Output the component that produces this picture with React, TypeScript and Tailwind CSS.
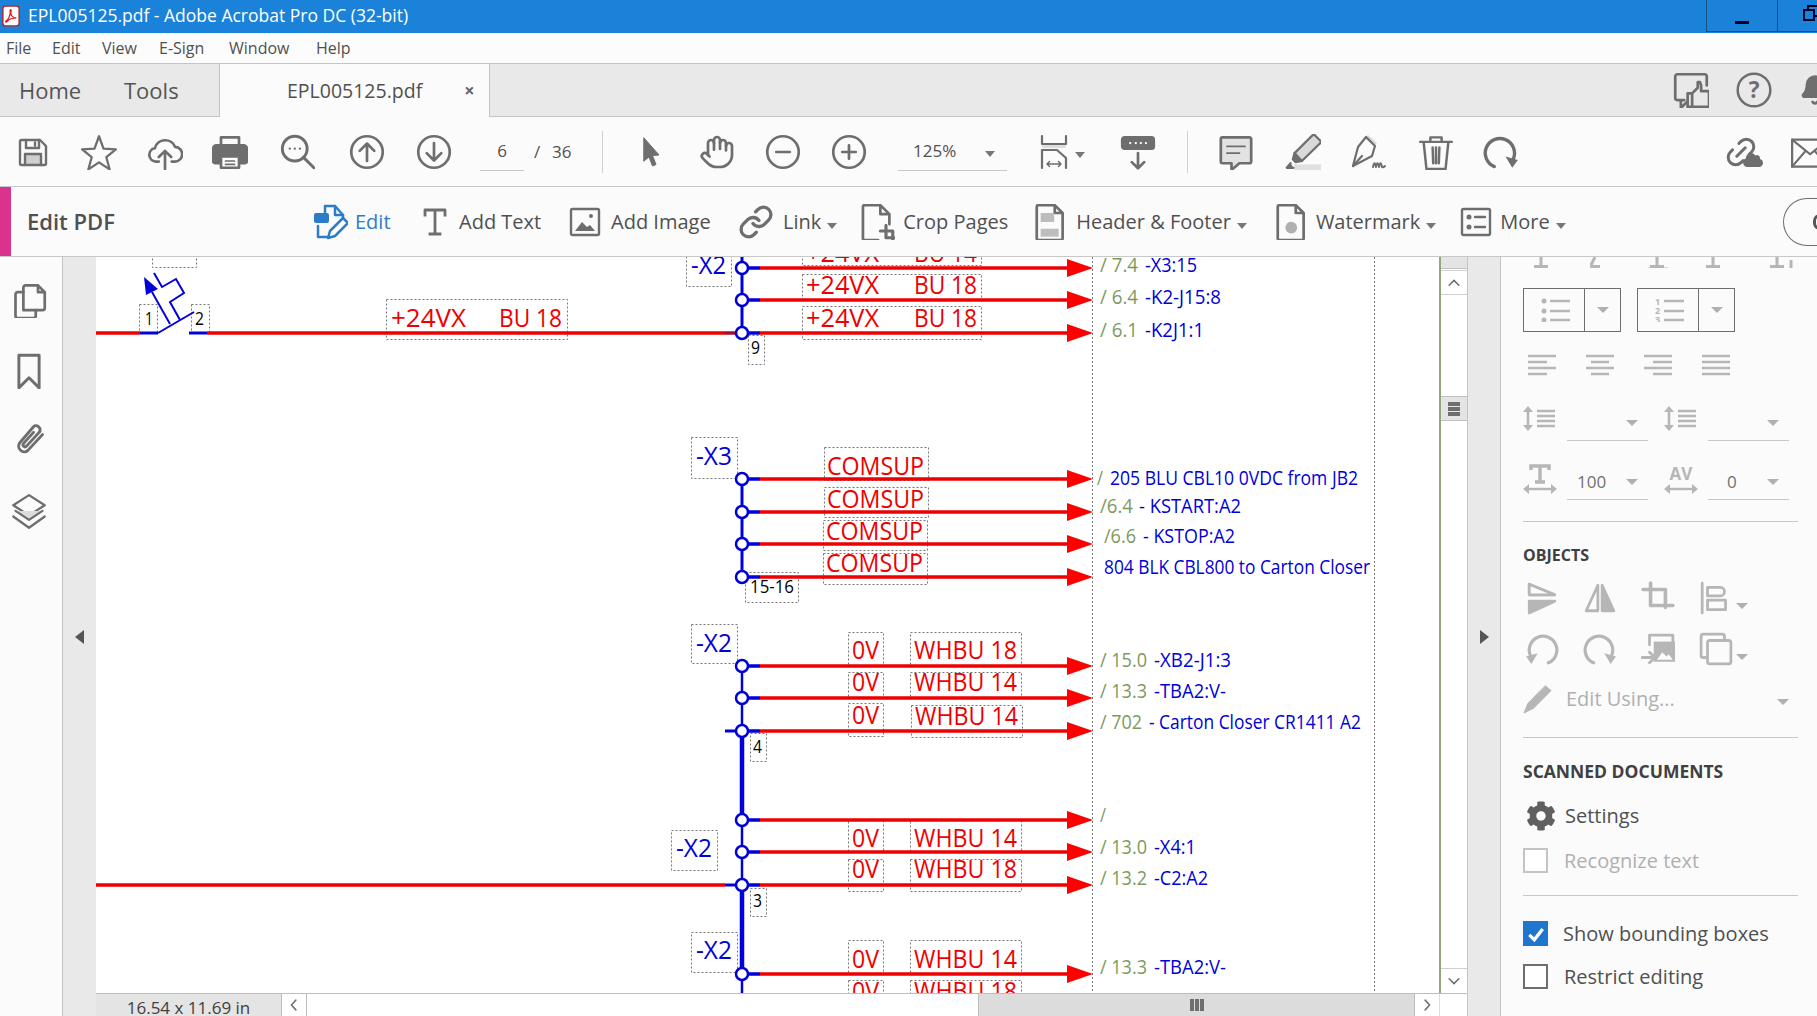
import type { ReactNode } from "react"
import { Bell, Hand, Link, Link2 } from "lucide-react"
import { FaCog, FaCloud } from "react-icons/fa"

const G = "#6e6e6e"
const L = "#b6b6b6"
const BLUE = "#0000d8"
const RED = "#ee0000"
const GREEN = "#7d9a5e"

function Ico({ children, className = "w-8 h-8", color = G, sw = 2.4 }: { children: ReactNode; className?: string; color?: string; sw?: number }) {
  return (
    <svg viewBox="0 0 32 32" fill="none" stroke={color} strokeWidth={sw} strokeLinecap="round" strokeLinejoin="round" className={className}>
      {children}
    </svg>
  )
}

function Caret({ light = false }: { light?: boolean }) {
  return <span className={light ? "inline-block h-0 w-0 border-x-[6px] border-t-[6px] border-x-transparent border-t-[#b0b0b0]" : "inline-block h-0 w-0 border-x-[5px] border-t-[6px] border-x-transparent border-t-[#777777]"} />
}

function Slot({ w, children }: { w: string; children: ReactNode }) {
  return <div className={`flex shrink-0 items-center justify-center ${w}`}>{children}</div>
}

const Save = () => (
  <Ico>
    <rect x="8" y="18" width="16" height="10" fill="#cfcfcf" stroke="none" />
    <path d="M3 5.500A1.500 1.500 0 0 1 4.500 4H23l6 6v17.500a1.500 1.500 0 0 1-1.500 1.500h-23A1.500 1.500 0 0 1 3 27.500z" />
    <path d="M9 4v8h13V4M18 6.500v3M8 29V18h16v11" />
  </Ico>
)
const Star = () => (
  <Ico className="h-9 w-9" sw={2}>
    <path d="M16 2l4 11 11 .6-8.500 7 3 10.900L16 25.200 6.500 31.500l3-10.900L1 13.600 12 13z" />
  </Ico>
)
const Upload = () => (
  <Ico className="h-9 w-9">
    <path d="M10.500 24.500H8a6 6 0 0 1-1-11.900A9.500 9.500 0 0 1 25 11.500a6.500 6.500 0 0 1-.5 13H22" />
    <path d="M16 31V15M10.500 20.500L16 15l5.500 5.500" />
  </Ico>
)
const Print = () => (
  <Ico className="h-9 w-9">
    <path d="M8 11V3h16v8" />
    <path d="M4 10h24a3 3 0 0 1 3 3v11a2 2 0 0 1-2 2h-4v-6H7v6H3a2 2 0 0 1-2-2V13a3 3 0 0 1 3-3z" fill={G} />
    <rect x="8" y="20" width="16" height="10" fill="#fff" />
    <path d="M12 24h8M12 27h8" strokeWidth="1.500" />
  </Ico>
)
const Zoom = () => (
  <Ico className="h-9 w-9" sw={2.6}>
    <circle cx="14" cy="13" r="11" />
    <path d="M22 21l9 9" />
    <path d="M9.500 13h.1M14 13h.1M18.500 13h.1" strokeWidth="2" />
  </Ico>
)
const Circ = ({ d }: { d: string }) => (
  <Ico className="h-9 w-9" sw={2.4}>
    <circle cx="16" cy="16" r="14" />
    <path d={d} />
  </Ico>
)
const Cursor = () => (
  <Ico sw={1}>
    <path d="M9 2l15 17-6.500.5 3.500 9-3.500 1.500-3.500-9L9 25z" fill={G} />
  </Ico>
)
const FitW = () => (
  <Ico className="h-9 w-8" sw={2.2}>
    <rect x="4" y="8" width="24" height="4" fill="#dddddd" stroke="none" />
    <path d="M4 0v8h24V0" />
    <path d="M4 32V14h15l9 8v10" />
    <path d="M9 28h14M11.500 25.500L9 28l2.500 2.500M20.500 25.500L23 28l-2.500 2.500" strokeWidth="1.500" />
  </Ico>
)
const Tray = () => (
  <Ico className="h-9 w-9">
    <rect x="2" y="3" width="28" height="10" rx="2" fill={G} />
    <path d="M9 8h.1M14 8h.1M18.500 8h.1M23 8h.1" stroke="#fff" strokeWidth="2" />
    <path d="M16 17v13M10.500 25l5.500 5.500 5.500-5.500" />
  </Ico>
)
const Comment = () => (
  <Ico className="h-9 w-9">
    <path d="M4 3h24a1.500 1.500 0 0 1 1.500 1.500v20A1.500 1.500 0 0 1 28 26h-9l-7 6v-6H4a1.500 1.500 0 0 1-1.500-1.500v-20A1.500 1.500 0 0 1 4 3z" fill="#e2e2e2" />
    <path d="M8 11h16M8 17h11" strokeWidth="1.600" />
  </Ico>
)
const Marker = () => (
  <Ico className="h-9 w-9" sw={2}>
    <rect x="8" y="27" width="24" height="5" fill="#e0e0e0" stroke="none" />
    <path d="M27 1.500l4 4a2 2 0 0 1 0 3L15 24l-6.500-7L24 1.500a2 2 0 0 1 3 0z" fill="#d9d9d9" />
    <path d="M8.500 17L7 22.500 9.500 25l5.500-1M5 26l-3.500 4h6" fill={G} />
  </Ico>
)
const Sign = () => (
  <svg viewBox="0 0 36 36" fill="none" stroke={G} strokeWidth="2.200" strokeLinecap="round" strokeLinejoin="round" className="h-9 w-9">
    <path d="M17 1l9 8-3 3-9-8z" fill="#d9d9d9" stroke="none" />
    <path d="M15 3l9 9-3 10L2 32l5-19z" />
    <path d="M2 32l9-10" />
    <path d="M22 33c1-5 2-5 3 0 1-5 2-5 3 0 1-5 2-5 3 0 1 1 2 0 3-1" strokeWidth="2" />
  </svg>
)
const Trash = () => (
  <Ico className="h-9 w-9" sw={2.2}>
    <path d="M2 7h28M11 7V3h10v4M5 7l2.500 24h17L27 7M13 12l.5 14M16 12v14M19 12l-.5 14" />
  </Ico>
)
const Rotate = ({ color = G, flip = false, size = "h-9 w-9" }: { color?: string; flip?: boolean; size?: string }) => (
  <Ico className={flip ? `${size} -scale-x-100` : size} color={color} sw={3}>
    <path d="M10 29A13 13 0 1 1 27 22" />
    <path d="M20 20l11 3-5 7z" fill={color} stroke="none" />
  </Ico>
)
const Like = () => (
  <Ico className="h-9 w-9">
    <path d="M10 25H4a2 2 0 0 1-2-2V4a2 2 0 0 1 2-2h24a2 2 0 0 1 2 2v8M7 25v7l5-5" />
    <path d="M13 19h4v12h-4zM17 19l5-5v-5h2l1 3v5h7v14H17" fill="#e9e9e9" />
  </Ico>
)
const Help = () => (
  <svg viewBox="0 0 32 32" className="h-9 w-9">
    <circle cx="16" cy="16" r="14.500" fill="none" stroke={G} strokeWidth="2.200" />
    <text x="16" y="23" textAnchor="middle" fontSize="20" fontWeight="700" fill={G} fontFamily="Open Sans">?</text>
  </svg>
)
const LinkCloud = () => (
  <div className="relative h-9 w-10">
    <Link2 className="absolute left-0 top-0 h-9 w-9 -rotate-45 text-[#6e6e6e]" strokeWidth={2} />
    <FaCloud className="absolute bottom-0 right-0 h-5 w-5 text-[#6e6e6e]" />
  </div>
)
const Mail = () => (
  <Ico className="h-9 w-9 shrink-0" sw={2}>
    <rect x="1" y="5" width="32" height="24" />
    <path d="M1 5l16 13L33 5M1 29l12-14M33 29L21 15" />
  </Ico>
)

const EditIco = () => (
  <svg viewBox="0 0 36 36" fill="none" stroke="#2d7cc8" strokeWidth="2.500" strokeLinecap="round" strokeLinejoin="round" className="h-9 w-9 shrink-0">
    <path d="M13 9V2h10l8 9v6" />
    <path d="M23 2v9h8" />
    <rect x="2" y="9" width="15" height="10" rx="2" fill="#2d7cc8" stroke="none" />
    <path d="M6 22v11h10" />
    <path d="M16 34l2-7L31 14l5 5-13 13z" fill="#fff" />
  </svg>
)
const TIco = () => (
  <Ico>
    <path d="M6 9V4h20v5M16 4v24M11 28h10" strokeWidth="2.800" strokeLinecap="square" />
  </Ico>
)
const ImgIco = () => (
  <Ico>
    <rect x="2" y="3" width="28" height="26" rx="1.500" />
    <path d="M6 25l7-9 5 5 3-2 5 6z" fill={G} stroke="none" />
    <circle cx="22" cy="10" r="2" fill={G} stroke="none" />
  </Ico>
)
const CropIco = () => (
  <Ico className="h-9 w-9" sw={2.400}>
    <path d="M17 32H5a1.500 1.500 0 0 1-1.500-1.500v-28A1.500 1.500 0 0 1 5 1h14l8 8v9M19 1v8h8" />
    <path d="M24 19v11h8M19 24h11v8" strokeWidth="2.800" />
  </Ico>
)
const HeaderIco = () => (
  <Ico className="h-9 w-9" sw={2.400}>
    <path d="M7 1h15l7 7v22.500a1.500 1.500 0 0 1-1.500 1.500h-20A1.500 1.500 0 0 1 6 30.500v-28A1.500 1.500 0 0 1 7 1zM22 1v7h7" />
    <rect x="9.500" y="8" width="12" height="8" fill="#bdbdbd" stroke="none" />
    <rect x="9.500" y="22" width="16" height="7" fill="#bdbdbd" stroke="none" />
  </Ico>
)
const WaterIco = () => (
  <Ico className="h-9 w-9" sw={2.400}>
    <path d="M7 1h15l7 7v22.500a1.500 1.500 0 0 1-1.500 1.500h-20A1.500 1.500 0 0 1 6 30.500v-28A1.500 1.500 0 0 1 7 1zM22 1v7h7" />
    <circle cx="18" cy="21" r="4" fill="#b0b0b0" stroke="#b0b0b0" strokeDasharray="2 1" />
  </Ico>
)
const MoreIco = () => (
  <Ico>
    <rect x="2" y="3" width="28" height="26" rx="1.500" />
    <circle cx="9" cy="11" r="2.500" fill={G} stroke="none" />
    <circle cx="9" cy="21" r="2.500" fill={G} stroke="none" />
    <path d="M15 11h10M15 21h10" />
  </Ico>
)

const Pages = () => (
  <Ico className="h-9 w-9">
    <path d="M11 25V5a2 2 0 0 1 2-2h11l6 6v14a2 2 0 0 1-2 2zM24 3v6h6" />
    <path d="M11 9H6a2 2 0 0 0-2 2v19a2 2 0 0 0 2 2h14a2 2 0 0 0 2-2v-5" />
  </Ico>
)
const Bookmark2 = () => (
  <Ico className="h-9 w-9" sw={2.600}>
    <path d="M7 2h18v29l-9-9-9 9z" />
  </Ico>
)
const Clip = () => (
  <Ico className="h-9 w-9" sw={2.600}>
    <path d="M28 13L15 27c-4 4-11-2-7-7L20 6c3-3 8 2 5 5L14 23c-2 2-4 0-3-2l9-10" />
  </Ico>
)
const LayersI = () => (
  <Ico className="h-9 w-9" sw={2}>
    <path d="M16 1l14 9-14 9-14-9z" />
    <path d="M4 15l12 8 12-8" fill="#dcdcdc" />
    <path d="M2 20l14 10 14-10" />
  </Ico>
)

/* right panel, all of it greyed out */
const ListI = ({ numbered }: { numbered?: boolean }) => (
  <svg viewBox="0 0 32 24" className="h-6 w-8 font-['Open_Sans']" fill="none" stroke={L} strokeWidth="2.400">
    {numbered ? (
      <>
        <text x="1" y="7" fontSize="9" fontWeight="700" fill={L} stroke="none">1</text>
        <text x="1" y="16" fontSize="9" fontWeight="700" fill={L} stroke="none">2</text>
        <text x="1" y="24.500" fontSize="9" fontWeight="700" fill={L} stroke="none">3</text>
      </>
    ) : (
      <>
        <circle cx="4" cy="3" r="2.500" fill={L} stroke="none" />
        <circle cx="4" cy="13" r="2.500" fill={L} stroke="none" />
        <circle cx="4" cy="22" r="2.500" fill={L} stroke="none" />
      </>
    )}
    <path d="M10 3h20M10 13h20M10 22h20" />
  </svg>
)
const Align = ({ d }: { d: string }) => (
  <svg viewBox="0 0 28 22" className="h-[22px] w-7" fill="none" stroke={L} strokeWidth="2.400">
    <path d={d} />
  </svg>
)
const LineSp = () => (
  <svg viewBox="0 0 32 27" className="h-[27px] w-8" fill="none" stroke={L} strokeWidth="2.600">
    <path d="M5 3v21" />
    <path d="M0 7l5-6 5 6zM0 20l5 6 5-6z" fill={L} stroke="none" />
    <path d="M14 6h18M14 11h18M14 16h18M14 21h18" />
  </svg>
)
const WidthT = ({ av }: { av?: boolean }) => (
  <svg viewBox="0 0 34 30" className="h-[30px] w-[34px]" fill="none" stroke={L} strokeWidth="2.400">
    {av ? (
      <text x="17" y="16" textAnchor="middle" fontSize="17" fontWeight="700" fill={L} stroke="none" fontFamily="Open Sans">AV</text>
    ) : (
      <path d="M8 6V2h18v4M17 2v16M12 18h10" strokeWidth="3.400" />
    )}
    <path d="M3 25h28" />
    <path d="M6 20l-6 5 6 5zM28 20l6 5-6 5z" fill={L} stroke="none" />
  </svg>
)
const PanelIco = ({ children }: { children: ReactNode }) => (
  <Ico className="h-[34px] w-[34px]" color={L} sw={2.600}>
    {children}
  </Ico>
)

function Tx({ x, y, w, fill, size, children }: { x: number; y: number; w: number; fill: string; size: number; children: string }) {
  return (
    <text x={x} y={y} textLength={w} lengthAdjust="spacingAndGlyphs" fontSize={size} fill={fill}>
      {children}
    </text>
  )
}

function Box({ x1, y1, x2, y2 }: { x1: number; y1: number; x2: number; y2: number }) {
  return <rect x={x1 + 0.5} y={y1 + 0.5} width={x2 - x1} height={y2 - y1} fill="none" stroke="#777" strokeWidth="1" strokeDasharray="2 2" />
}

const wires = [268, 300, 333, 479, 512, 544, 577, 666, 698, 731, 820, 852, 885, 974]

type Lab = { t: string; x: number; y: number; w: number }
const redLabels: Lab[] = [
  { t: "+24VX", x: 391, y: 327, w: 75 },
  { t: "BU 18", x: 499, y: 327, w: 63 },
  { t: "+24VX", x: 806, y: 262, w: 73 },
  { t: "BU 14", x: 914, y: 262, w: 63 },
  { t: "+24VX", x: 806, y: 294, w: 73 },
  { t: "BU 18", x: 914, y: 294, w: 63 },
  { t: "+24VX", x: 806, y: 327, w: 73 },
  { t: "BU 18", x: 914, y: 327, w: 63 },
  { t: "COMSUP", x: 827, y: 475, w: 97 },
  { t: "COMSUP", x: 827, y: 508, w: 97 },
  { t: "COMSUP", x: 826, y: 540, w: 97 },
  { t: "COMSUP", x: 826, y: 572, w: 97 },
  { t: "0V", x: 852, y: 659, w: 27 },
  { t: "WHBU 18", x: 914, y: 659, w: 103 },
  { t: "0V", x: 852, y: 691, w: 27 },
  { t: "WHBU 14", x: 914, y: 691, w: 103 },
  { t: "0V", x: 852, y: 724, w: 27 },
  { t: "WHBU 14", x: 915, y: 725, w: 103 },
  { t: "0V", x: 852, y: 847, w: 27 },
  { t: "WHBU 14", x: 914, y: 847, w: 103 },
  { t: "0V", x: 852, y: 878, w: 27 },
  { t: "WHBU 18", x: 914, y: 878, w: 103 },
  { t: "0V", x: 852, y: 968, w: 27 },
  { t: "WHBU 14", x: 914, y: 968, w: 103 },
  { t: "0V", x: 852, y: 1000, w: 27 },
  { t: "WHBU 18", x: 914, y: 1000, w: 103 },
]

const boxes = [
  [152, 250, 196, 267], [139, 304, 157, 333], [191, 304, 209, 333], [386, 299, 567, 339],
  [686, 240, 731, 286], [802, 240, 981, 265], [802, 274, 981, 300], [802, 306, 981, 339], [748, 335, 764, 364],
  [691, 437, 737, 478], [824, 447, 928, 480], [824, 487, 928, 517], [823, 520, 927, 550], [823, 553, 927, 584], [745, 572, 798, 602],
  [691, 624, 737, 663], [848, 632, 883, 665], [848, 672, 883, 697], [848, 703, 883, 736], [910, 632, 1021, 665], [910, 672, 1021, 697], [911, 705, 1022, 737], [750, 733, 766, 761],
  [671, 830, 717, 870], [848, 819, 883, 852], [848, 859, 883, 891], [910, 819, 1021, 852], [910, 859, 1021, 891], [750, 888, 766, 916],
  [691, 932, 737, 972], [848, 940, 883, 973], [910, 940, 1021, 973], [848, 980, 883, 1010], [910, 980, 1021, 1010],
]

const refs: { g: string; gx: number; gw: number; t: string; x: number; w: number; y: number }[] = [
  { g: "/ 7.4", gx: 1100, gw: 38, t: "-X3:15", x: 1145, w: 52, y: 272 },
  { g: "/ 6.4", gx: 1100, gw: 38, t: "-K2-J15:8", x: 1145, w: 76, y: 304 },
  { g: "/ 6.1", gx: 1100, gw: 38, t: "-K2J1:1", x: 1145, w: 59, y: 337 },
  { g: "/", gx: 1097, gw: 6, t: "205 BLU CBL10 0VDC from JB2", x: 1110, w: 248, y: 485 },
  { g: "/6.4", gx: 1100, gw: 33, t: "- KSTART:A2", x: 1139, w: 102, y: 513 },
  { g: "/6.6", gx: 1104, gw: 32, t: "- KSTOP:A2", x: 1143, w: 92, y: 543 },
  { g: "", gx: 0, gw: 0, t: "804 BLK CBL800 to Carton Closer", x: 1104, w: 266, y: 574 },
  { g: "/ 15.0", gx: 1100, gw: 47, t: "-XB2-J1:3", x: 1154, w: 77, y: 667 },
  { g: "/ 13.3", gx: 1100, gw: 47, t: "-TBA2:V-", x: 1154, w: 72, y: 698 },
  { g: "/ 702", gx: 1100, gw: 42, t: "- Carton Closer CR1411 A2", x: 1149, w: 212, y: 729 },
  { g: "/", gx: 1100, gw: 6, t: "", x: 0, w: 0, y: 822 },
  { g: "/ 13.0", gx: 1100, gw: 47, t: "-X4:1", x: 1154, w: 42, y: 854 },
  { g: "/ 13.2", gx: 1100, gw: 47, t: "-C2:A2", x: 1154, w: 54, y: 885 },
  { g: "/ 13.3", gx: 1100, gw: 47, t: "-TBA2:V-", x: 1154, w: 72, y: 974 },
]

function Schematic() {
  return (
    <svg viewBox="96 257 1343 736" className="h-[736px] w-[1343px] shrink-0 bg-white font-['Open_Sans']">
      <line x1="1092.500" y1="257" x2="1092.500" y2="993" stroke="#777" strokeDasharray="2 2" />
      <line x1="1374.500" y1="257" x2="1374.500" y2="993" stroke="#777" strokeDasharray="2 2" />
      {boxes.map(([a, b, c, d], i) => (
        <Box key={i} x1={a} y1={b} x2={c} y2={d} />
      ))}

      {/* bus, in three separate runs */}
      <line x1="742" y1="257" x2="742" y2="333" stroke={BLUE} strokeWidth="3" />
      <line x1="742" y1="479" x2="742" y2="577" stroke={BLUE} strokeWidth="3" />
      <line x1="742" y1="666" x2="742" y2="731" stroke={BLUE} strokeWidth="2.500" />
      <line x1="742" y1="731" x2="742" y2="820" stroke={BLUE} strokeWidth="4.500" />
      <line x1="742" y1="820" x2="742" y2="885" stroke={BLUE} strokeWidth="2.500" />
      <line x1="742" y1="885" x2="742" y2="974" stroke={BLUE} strokeWidth="4.500" />
      <line x1="742" y1="974" x2="742" y2="993" stroke={BLUE} strokeWidth="2.500" />

      {/* feed lines */}
      <line x1="96" y1="333" x2="140" y2="333" stroke={RED} strokeWidth="3.500" />
      <line x1="207" y1="333" x2="725" y2="333" stroke={RED} strokeWidth="3.500" />
      <line x1="96" y1="885" x2="725" y2="885" stroke={RED} strokeWidth="3.500" />
      <line x1="725" y1="333" x2="736" y2="333" stroke="#a01030" strokeWidth="3.500" />
      <line x1="725" y1="731" x2="736" y2="731" stroke={BLUE} strokeWidth="3" />
      <line x1="725" y1="885" x2="736" y2="885" stroke={BLUE} strokeWidth="3" />

      {wires.map((y) => (
        <g key={y}>
          <line x1="748" y1={y} x2="760" y2={y} stroke={BLUE} strokeWidth="3.500" />
          <line x1="760" y1={y} x2="1068" y2={y} stroke={RED} strokeWidth="3.500" />
          <polygon points={`1067,${y - 9} 1093,${y} 1067,${y + 9}`} fill="#ff0000" />
          <circle cx="742" cy={y} r="6" fill="#fff" stroke={BLUE} strokeWidth="2.500" />
        </g>
      ))}

      {/* switch symbol */}
      <g fill="none" stroke={BLUE} strokeWidth="2">
        <line x1="140" y1="333" x2="158" y2="333" strokeWidth="3" />
        <line x1="189" y1="333" x2="207" y2="333" strokeWidth="3" />
        <line x1="158" y1="333" x2="194" y2="312" />
        <line x1="152" y1="292" x2="170" y2="324" />
        <polyline points="180,320 170,302 184,293 176,279 162,287 154,273" />
        <polygon points="144,277 146,295 158,289" fill={BLUE} stroke="none" />
      </g>

      {redLabels.map((l, i) => (
        <Tx key={i} x={l.x} y={l.y} w={l.w} fill={RED} size={26}>{l.t}</Tx>
      ))}

      <Tx x={691} y={274} w={35} fill={BLUE} size={26}>-X2</Tx>
      <Tx x={696} y={465} w={36} fill={BLUE} size={26}>-X3</Tx>
      <Tx x={696} y={652} w={36} fill={BLUE} size={26}>-X2</Tx>
      <Tx x={676} y={857} w={36} fill={BLUE} size={26}>-X2</Tx>
      <Tx x={696} y={959} w={36} fill={BLUE} size={26}>-X2</Tx>

      <Tx x={145} y={325} w={8} fill="#000" size={18}>1</Tx>
      <Tx x={195} y={325} w={9} fill="#000" size={18}>2</Tx>
      <Tx x={751} y={354} w={9} fill="#000" size={18}>9</Tx>
      <Tx x={750} y={593} w={44} fill="#000" size={18}>15-16</Tx>
      <Tx x={753} y={753} w={9} fill="#000" size={18}>4</Tx>
      <Tx x={753} y={907} w={9} fill="#000" size={18}>3</Tx>

      {refs.map((r, i) => (
        <g key={i}>
          {r.g && <Tx x={r.gx} y={r.y} w={r.gw} fill={GREEN} size={20}>{r.g}</Tx>}
          {r.t && <Tx x={r.x} y={r.y} w={r.w} fill={BLUE} size={20}>{r.t}</Tx>}
        </g>
      ))}
    </svg>
  )
}

function ScrollV() {
  return (
    <div className="flex w-[26px] shrink-0 flex-col bg-white">
      <div className="h-[12px] border-b border-[#c0c0c0] bg-[#e4e4e4]" />
      <div className="mt-px flex h-[25px] items-center justify-center border-y border-[#d0d0d0]">
        <Ico className="h-3 w-3" sw={4}><path d="M3 22L16 9l13 13" /></Ico>
      </div>
      <div className="mt-[101px] flex h-[25px] flex-col items-center justify-center gap-px border-y border-[#c0c0c0] bg-[#e4e4e4]">
        <div className="h-1 w-3 bg-[#6e6e6e]" />
        <div className="h-1 w-3 bg-[#6e6e6e]" />
        <div className="h-1 w-3 bg-[#6e6e6e]" />
      </div>
      <div className="flex-1" />
      <div className="flex h-[25px] items-center justify-center border-t border-[#d0d0d0]">
        <Ico className="h-3 w-3" sw={4}><path d="M3 10l13 13 13-13" /></Ico>
      </div>
    </div>
  )
}

function BottomBar() {
  return (
    <div className="flex h-[23px] shrink-0 border-t border-[#bdbdbd] bg-white">
      <div className="flex w-[185px] items-center justify-center overflow-hidden bg-[#e4e4e4] pt-[5px] text-[17px] text-[#404040]">16.54 x 11.69 in</div>
      <div className="flex w-[26px] items-center justify-center border-x border-[#bdbdbd]">
        <Ico className="h-3 w-3" sw={4}><path d="M21 3L9 16l12 13" /></Ico>
      </div>
      <div className="w-[671px]" />
      <div className="flex w-[437px] items-center justify-center gap-px border-x border-[#bdbdbd] bg-[#dcdcdc]">
        <div className="h-3 w-1 bg-[#6e6e6e]" />
        <div className="h-3 w-1 bg-[#6e6e6e]" />
        <div className="h-3 w-1 bg-[#6e6e6e]" />
      </div>
      <div className="flex w-[25px] items-center justify-center border-r border-[#dddddd]">
        <Ico className="h-3 w-3" sw={4}><path d="M11 3l12 13-12 13" /></Ico>
      </div>
    </div>
  )
}

function Divider({ className }: { className: string }) {
  return <div className={`h-px w-[275px] shrink-0 bg-[#c8c8c8] ${className}`} />
}

function Panel() {
  return (
    <aside className="flex flex-1 flex-col overflow-hidden bg-[#fbfbfb] pl-[22px] text-[#505050]">
      <div className="h-[11px] shrink-0 overflow-hidden">
        <svg viewBox="0 0 275 11" className="h-[11px] w-[275px]" fill="none" stroke={L} strokeWidth="3">
          <path d="M18 0v8M11 9.500h14M72 0l-4 8M67 9.500h10M134 0v8M127 9.500h14M190 0v8M183 9.500h14M254 0v8M247 9.500h14" />
          <path d="M125 11h20" stroke={L} strokeWidth="1" />
          <path d="M268 3v8" strokeWidth="3" />
        </svg>
      </div>
      <div className="mt-[20px] flex h-[44px] shrink-0 gap-4">
        <div className="flex w-[98px] border border-[#6e6e6e]">
          <div className="flex flex-1 items-center justify-center border-r border-[#6e6e6e] pl-1"><ListI /></div>
          <div className="flex w-[35px] items-center justify-center"><Caret light /></div>
        </div>
        <div className="flex w-[98px] border border-[#6e6e6e]">
          <div className="flex flex-1 items-center justify-center border-r border-[#6e6e6e] pl-1"><ListI numbered /></div>
          <div className="flex w-[35px] items-center justify-center"><Caret light /></div>
        </div>
      </div>
      <div className="mt-[22px] flex h-[22px] shrink-0 gap-[30px] pl-[5px]">
        <Align d="M0 2h28M0 8h19M0 14h28M0 20h19" />
        <Align d="M0 2h28M5 8h18M0 14h28M5 20h18" />
        <Align d="M0 2h28M9 8h19M0 14h28M9 20h19" />
        <Align d="M0 2h28M0 8h28M0 14h28M0 20h28" />
      </div>
      <div className="mt-[29px] flex h-[36px] shrink-0">
        <div className="w-[44px] shrink-0"><LineSp /></div>
        <div className="flex h-[36px] w-[81px] items-center justify-end border-b border-[#c8c8c8] pr-[10px]"><Caret light /></div>
        <div className="ml-[16px] w-[44px] shrink-0"><LineSp /></div>
        <div className="flex h-[36px] w-[81px] items-center justify-end border-b border-[#c8c8c8] pr-[10px]"><Caret light /></div>
      </div>
      <div className="mt-[23px] flex h-[36px] shrink-0">
        <div className="w-[44px] shrink-0"><WidthT /></div>
        <div className="flex h-[36px] w-[81px] items-center justify-between border-b border-[#c8c8c8] pl-[10px] pr-[10px] text-[17px] text-[#707070]"><span>100</span><Caret light /></div>
        <div className="ml-[16px] w-[44px] shrink-0"><WidthT av /></div>
        <div className="flex h-[36px] w-[81px] items-center justify-between border-b border-[#c8c8c8] pl-[19px] pr-[10px] text-[17px] text-[#707070]"><span>0</span><Caret light /></div>
      </div>
      <Divider className="mt-[21px]" />
      <div className="mt-[24px] h-[18px] shrink-0 text-[16px] font-bold leading-[18px] text-[#404040]">OBJECTS</div>
      <div className="mt-[17px] flex h-[34px] shrink-0 pl-[2px]">
        <div className="w-[58px]"><PanelIco><path d="M4 3l24 10H4zM4 19h24L4 30z" fill={L} /><path d="M4 3l24 10H4z" fill="#fbfbfb" /></PanelIco></div>
        <div className="w-[58px]"><PanelIco><path d="M14 4v24H3z" fill="#fbfbfb" /><path d="M18 4v24h11z" fill={L} /></PanelIco></div>
        <div className="w-[58px]"><PanelIco><path d="M2 8h21v17M9 2v21h21" strokeWidth="3.400" /></PanelIco></div>
        <div className="flex w-[58px] items-start"><PanelIco><path d="M3 2v28M8 6h12a2 2 0 0 1 0 8H8zM8 18h17v9H8z" /></PanelIco><span className="ml-[3px] mt-[10px]"><Caret light /></span></div>
      </div>
      <div className="mt-[17px] flex h-[34px] shrink-0 pl-[2px]">
        <div className="w-[58px]"><Rotate color={L} flip size="h-[34px] w-[34px]" /></div>
        <div className="w-[58px]"><Rotate color={L} size="h-[34px] w-[34px]" /></div>
        <div className="w-[58px]"><PanelIco><path d="M8 12V3h22v20h-6" /><rect x="12" y="9" width="20" height="19" fill={L} stroke="none" /><path d="M15 26l5-7 4 4 2-2 4 5z" fill="#fbfbfb" stroke="none" /><path d="M1 24h12M8 19l5 5-5 5" /></PanelIco></div>
        <div className="flex w-[58px] items-start"><PanelIco><rect x="2" y="2" width="22" height="22" rx="2" /><rect x="8" y="8" width="22" height="22" rx="2" fill="#fbfbfb" /></PanelIco><span className="ml-[3px] mt-[10px]"><Caret light /></span></div>
      </div>
      <div className="mt-[18px] flex h-[30px] w-[275px] shrink-0 items-center">
        <Ico className="h-[30px] w-[30px] shrink-0" color={L} sw={1}>
          <path d="M24 2l6 5-19 19-10 5 4-10z" fill={L} />
        </Ico>
        <span className="ml-[13px] flex-1 text-[20px] text-[#b0b0b0]">Edit Using...</span>
        <span className="mr-[9px]"><Caret light /></span>
      </div>
      <Divider className="mt-[23px]" />
      <div className="mt-[24px] h-[18px] shrink-0 text-[17.500px] font-bold leading-[18px] text-[#404040]">SCANNED DOCUMENTS</div>
      <div className="mt-[21px] flex h-[30px] shrink-0 items-center">
        <FaCog className="ml-[3px] h-[30px] w-[30px] text-[#606060]" />
        <span className="ml-[9px] text-[20px] text-[#505050]">Settings</span>
      </div>
      <div className="mt-[17px] flex h-[25px] shrink-0 items-center">
        <div className="h-[25px] w-[25px] border-2 border-[#c4c4c4] bg-white" />
        <span className="ml-[16px] text-[20px] text-[#b0b0b0]">Recognize text</span>
      </div>
      <Divider className="mt-[22px]" />
      <div className="mt-[25px] flex h-[25px] shrink-0 items-center">
        <div className="flex h-[25px] w-[25px] items-center justify-center bg-[#1f76cc]">
          <svg viewBox="0 0 24 24" className="h-5 w-5" fill="none" stroke="#fff" strokeWidth="4"><path d="M4 13l6 6L20 6" /></svg>
        </div>
        <span className="ml-[15px] text-[20px] text-[#505050]">Show bounding boxes</span>
      </div>
      <div className="mt-[18px] flex h-[25px] shrink-0 items-center">
        <div className="h-[25px] w-[25px] border-2 border-[#6e6e6e] bg-white" />
        <span className="ml-[16px] text-[20px] text-[#505050]">Restrict editing</span>
      </div>
    </aside>
  )
}

function App() {
  return (
    <div className="flex h-[1016px] w-[1817px] flex-col overflow-hidden bg-[#fbfbfb] font-['Open_Sans'] text-[#505050]">
      {/* title bar */}
      <div className="flex h-[33px] shrink-0 items-start bg-[#1a82d8] text-white">
        <svg viewBox="0 0 20 24" className="ml-[2px] mt-[4px] h-[24px] w-[18px] shrink-0">
          <rect x="1" y="1" width="18" height="22" rx="3" fill="#fff" stroke="#b3202a" strokeWidth="1.500" />
          <path d="M4 18c3-1 6-8 5-12 0-2 2-1 1 2-1 3 2 6 6 6-3 0-8 1-10 4-1 1-2 1-2 0z" fill="none" stroke="#d8232a" strokeWidth="1.400" />
        </svg>
        <div className="ml-[8px] mt-[3px] text-[17.500px] leading-[24px]">EPL005125.pdf - Adobe Acrobat Pro DC (32-bit)</div>
        <div className="ml-auto flex h-[32px]">
          <div className="flex w-[71px] items-center justify-center border-b border-l border-[#15507f] pt-[13px]">
            <div className="h-[3px] w-[14px] bg-[#000020]" />
          </div>
          <div className="flex w-[40px] justify-end overflow-hidden border-b border-l border-[#15507f] pt-[5px]">
            <svg viewBox="0 0 16 16" className="-mr-[2px] h-4 w-4" fill="none" stroke="#000020" strokeWidth="2">
              <path d="M1 5h10v10H1zM5 5V1h10v10h-4" />
            </svg>
          </div>
        </div>
      </div>

      {/* menu */}
      <div className="flex h-[31px] shrink-0 items-center border-b border-[#c4c4c4] bg-[#fcfcfc] text-[16px]">
        <span className="ml-[6px] w-[46px]">File</span>
        <span className="w-[50px]">Edit</span>
        <span className="w-[57px]">View</span>
        <span className="w-[70px]">E-Sign</span>
        <span className="w-[87px]">Window</span>
        <span>Help</span>
      </div>

      {/* tabs */}
      <div className="flex h-[53px] shrink-0 border-b border-[#c4c4c4] bg-[#e9e9e9]">
        <div className="flex w-[219px] items-center text-[22px] text-[#555555]">
          <span className="ml-[19px] w-[105px]">Home</span>
          <span>Tools</span>
        </div>
        <div className="relative -mb-px flex w-[271px] items-center border-x border-[#c4c4c4] bg-[#fbfbfb] text-[19.500px]">
          <span className="ml-[67px]">EPL005125.pdf</span>
          <span className="ml-[42px] text-[18px] font-bold text-[#666666]">×</span>
        </div>
        <div className="ml-auto flex items-center">
          <div className="mr-[27px]"><Like /></div>
          <div className="mr-[15px]"><Help /></div>
          <div className="w-[30px] overflow-hidden"><Bell className="ml-[12px] h-8 w-8 fill-[#6e6e6e] text-[#6e6e6e]" /></div>
        </div>
      </div>

      {/* main toolbar */}
      <div className="flex h-[70px] shrink-0 items-center border-b border-[#c8c8c8] bg-[#fbfbfb] *:shrink-0">
        <Slot w="w-[66px]"><Save /></Slot>
        <Slot w="w-[66px]"><Star /></Slot>
        <Slot w="w-[66px]"><Upload /></Slot>
        <Slot w="w-[63px]"><Print /></Slot>
        <Slot w="w-[71px]"><Zoom /></Slot>
        <Slot w="w-[69px]"><Circ d="M16 24V9M9.500 15L16 8.500l6.500 6.500" /></Slot>
        <Slot w="w-[65px]"><Circ d="M16 8v15M9.500 17l6.500 6.500 6.500-6.500" /></Slot>
        <div className="ml-[14px] flex h-[38px] w-[44px] items-center justify-center border-b border-[#c8c8c8] text-[17px]">6</div>
        <span className="ml-[10px] w-[18px] text-[17px]">/</span>
        <span className="w-[46px] text-[17px]">36</span>
        <div className="ml-[4px] h-[42px] w-px bg-[#d0d0d0]" />
        <Slot w="w-[96px]"><Cursor /></Slot>
        <Slot w="w-[36px]"><Hand className="h-9 w-9 text-[#6e6e6e]" strokeWidth={1.800} /></Slot>
        <Slot w="w-[96px]"><Circ d="M10 16h12" /></Slot>
        <Slot w="w-[36px]"><Circ d="M10 16h12M16 10v12" /></Slot>
        <div className="ml-[31px] flex h-[38px] w-[109px] items-center border-b border-[#c8c8c8] pl-[15px] text-[17px]">
          <span className="flex-1">125%</span>
          <span className="mr-[12px]"><Caret /></span>
        </div>
        <div className="ml-[31px] flex w-[32px] items-center"><FitW /></div>
        <span className="ml-[5px]"><Caret /></span>
        <div className="ml-[1px]"><Slot w="w-[104px]"><Tray /></Slot></div>
        <div className="-ml-[3px] h-[42px] w-px bg-[#d0d0d0]" />
        <Slot w="w-[96px]"><Comment /></Slot>
        <Slot w="w-[37px]"><Marker /></Slot>
        <Slot w="w-[95px]"><Sign /></Slot>
        <Slot w="w-[40px]"><Trash /></Slot>
        <Slot w="w-[90px]"><Rotate /></Slot>
        <div className="ml-[177px] flex items-center">
          <LinkCloud />
          <div className="ml-[28px]"><Mail /></div>
        </div>
      </div>

      {/* edit bar */}
      <div className="flex h-[70px] shrink-0 items-center border-b border-[#c8c8c8] bg-[#fbfbfb] text-[20px] *:shrink-0">
        <div className="h-full w-[11px] bg-[#d9338e]" />
        <span className="ml-[16px] w-[289px] text-[22px] font-semibold text-[#505050]">Edit PDF</span>
        <div className="flex w-[28px] justify-center"><EditIco /></div>
        <span className="ml-[11px] w-[64px] text-[#2d7cc8]">Edit</span>
        <Slot w="w-[32px]"><TIco /></Slot>
        <span className="ml-[8px] w-[110px]">Add Text</span>
        <Slot w="w-[32px]"><ImgIco /></Slot>
        <span className="ml-[10px] w-[127px]">Add Image</span>
        <div className="flex w-[36px] justify-center"><Link className="h-9 w-9 text-[#6e6e6e]" strokeWidth={2.200} /></div>
        <span className="ml-[9px]">Link</span>
        <span className="ml-[6px]"><Caret /></span>
        <div className="ml-[22px] flex w-[36px] justify-center"><CropIco /></div>
        <span className="ml-[8px] w-[127px]">Crop Pages</span>
        <div className="flex w-[36px] justify-center"><HeaderIco /></div>
        <span className="ml-[10px]">Header &amp; Footer</span>
        <span className="ml-[6px]"><Caret /></span>
        <div className="ml-[24px] flex w-[36px] justify-center"><WaterIco /></div>
        <span className="ml-[9px]">Watermark</span>
        <span className="ml-[6px]"><Caret /></span>
        <div className="ml-[24px] flex w-[32px] justify-center"><MoreIco /></div>
        <span className="ml-[8px]">More</span>
        <span className="ml-[6px]"><Caret /></span>
        <div className="ml-auto flex h-[48px] w-[34px] items-center justify-end rounded-l-full border-y border-l border-[#6e6e6e]">
          <div className="-mr-[10px] h-[16px] w-[14px] rounded-full border-[3px] border-[#555555]" />
        </div>
      </div>

      {/* workspace */}
      <div className="flex min-h-0 flex-1">
        <aside className="flex w-[63px] shrink-0 flex-col items-center border-r border-[#c4c4c4] bg-[#fbfbfb] pr-[5px] pt-[25px]">
          <Pages />
          <div className="mt-[35px]"><Bookmark2 /></div>
          <div className="mt-[31px]"><Clip /></div>
          <div className="mt-[38px]"><LayersI /></div>
        </aside>
        <div className="flex w-[33px] shrink-0 items-center justify-center bg-[#e9e9e9]">
          <span className="h-0 w-0 border-y-[7px] border-r-[9px] border-y-transparent border-r-[#555555]" />
        </div>
        <div className="flex w-[1371px] shrink-0 flex-col">
          <div className="flex h-[736px] shrink-0">
            <Schematic />
            <div className="w-[2px] shrink-0 bg-[#8fa876]" />
            <ScrollV />
          </div>
          <BottomBar />
        </div>
        <div className="flex w-[34px] shrink-0 items-center justify-center border-x border-[#c4c4c4] bg-[#e9e9e9]">
          <span className="h-0 w-0 border-y-[7px] border-l-[9px] border-y-transparent border-l-[#555555]" />
        </div>
        <Panel />
      </div>
    </div>
  )
}

export default App
